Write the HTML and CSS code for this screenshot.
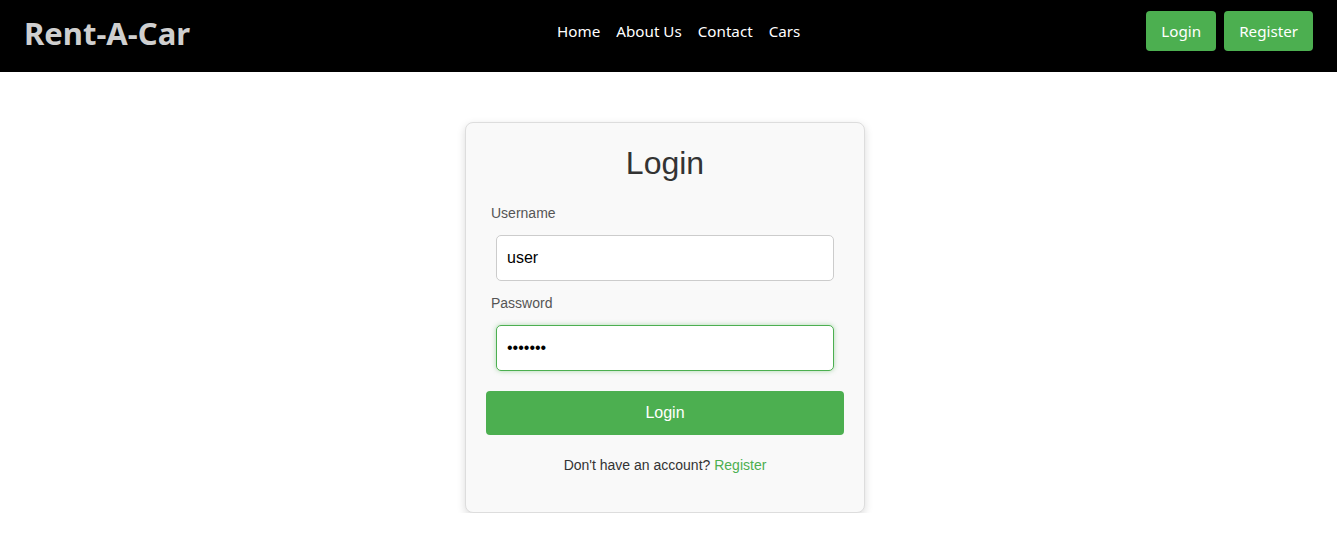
FILE: index.html
```html
<!DOCTYPE html>
<html lang="en">
<head>
<meta charset="utf-8">
<title>Rent-A-Car - Login</title>
<link rel="stylesheet" href="styles.css">
</head>
<body>
<header class="topbar">
  <div class="logo">Rent-A-Car</div>
  <nav class="nav">
    <a href="#">Home</a>
    <a href="#">About Us</a>
    <a href="#">Contact</a>
    <a href="#">Cars</a>
  </nav>
  <div class="auth">
    <a class="btn" href="#">Login</a>
    <a class="btn" href="#">Register</a>
  </div>
</header>
<main class="main">
  <form class="card">
    <h2 class="title">Login</h2>
    <label class="label" for="u">Username</label>
    <input class="input" id="u" type="text" value="user">
    <label class="label" for="p">Password</label>
    <input class="input focused" id="p" type="password" value="1234567">
    <button class="submit" type="button">Login</button>
    <p class="alt">Don't have an account? <a href="#">Register</a></p>
  </form>
</main>
</body>
</html>
```
FILE: styles.css
```css
* { box-sizing: border-box; }
body {
  margin: 0;
  background: #fff;
  font-family: "Liberation Sans", Arial, sans-serif;
}
.topbar {
  height: 72px;
  background: #000;
  display: flex;
  align-items: flex-start;
  justify-content: space-between;
  padding: 11px 24px 0;
}
.logo {
  height: 40px;
  display: flex;
  align-items: center;
  margin-top: 2px;
  font-family: "Noto Sans", "Open Sans", sans-serif;
  font-weight: 700;
  font-size: 31px;
  color: #cfcfcf;
}
.nav {
  height: 40px;
  display: flex;
  align-items: center;
  gap: 16px;
  padding-left: 21px;
}
.nav a {
  font-family: "Noto Sans", "Open Sans", sans-serif;
  font-size: 15.2px;
  color: #fff;
  text-decoration: none;
}
.auth {
  display: flex;
  gap: 8px;
}
.btn {
  display: flex;
  align-items: center;
  height: 40px;
  padding: 0 15px;
  background: #4caf50;
  color: #fff;
  border-radius: 4px;
  text-decoration: none;
  font-family: "Noto Sans", "Open Sans", sans-serif;
  font-size: 15.2px;
}
.main {
  display: flex;
  justify-content: center;
  padding-top: 50px;
}
.card {
  width: 400px;
  height: 391px;
  margin-left: -7px;
  background: #f9f9f9;
  border: 1px solid #ddd;
  border-radius: 8px;
  box-shadow: 0 3px 8px rgba(0,0,0,0.15);
  padding: 20px;
  display: flex;
  flex-direction: column;
}
.title {
  margin: 2px 0 23px;
  text-align: center;
  font-size: 32px;
  font-weight: 400;
  line-height: 37px;
  color: #333;
}
.label {
  display: block;
  margin: 0 0 14px 5px;
  font-size: 14px;
  line-height: 16px;
  color: #555;
}
.input {
  display: block;
  width: 338px;
  height: 46px;
  margin: 0 10px 14px;
  padding: 0 10px;
  border: 1px solid #ccc;
  border-radius: 5px;
  background: #fff;
  font-family: "Liberation Sans", Arial, sans-serif;
  font-size: 16px;
  color: #000;
  outline: none;
}
.input.focused {
  border-color: #4caf50;
  box-shadow: 0 0 5px rgba(76,175,80,0.45);
  margin-bottom: 20px;
}
.submit {
  height: 44px;
  width: 100%;
  border: none;
  border-radius: 4px;
  background: #4caf50;
  color: #fff;
  font-family: "Liberation Sans", Arial, sans-serif;
  font-size: 16px;
}
.alt {
  margin: 22px 0 0;
  text-align: center;
  font-size: 14px;
  line-height: 16px;
  color: #333;
}
.alt a {
  color: #4caf50;
  text-decoration: none;
}
```
